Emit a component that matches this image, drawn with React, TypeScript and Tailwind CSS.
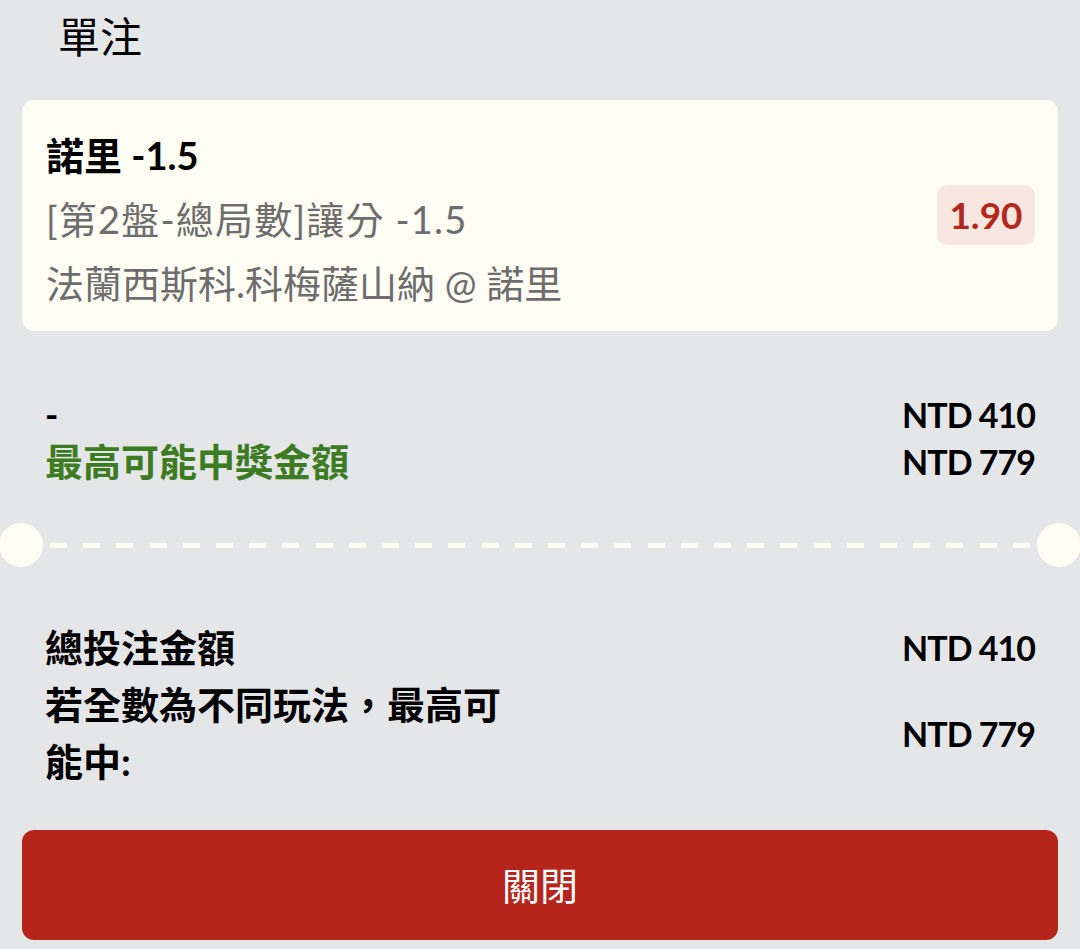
import React from 'react'

const dashes = Array.from({ length: 30 })

export default function App() {
  return (
    <div className="min-h-screen overflow-hidden bg-[#e5e6e8] font-['Lato','Noto_Sans_CJK_TC',sans-serif] text-black">
      {/* Title */}
      <div className="h-[100px] pl-[58px] pt-[10px] text-[42px] leading-[54px]">單注</div>

      {/* Selection card */}
      <div className="mx-[22px] flex items-center justify-between rounded-[12px] bg-[#fefdf4] pb-[16px] pl-[24px] pr-[23px] pt-[23px]">
        <div className="text-[38px] leading-[64px]">
          <div className="font-bold">諾里 -1.5</div>
          <div className="tracking-[1.2px] text-[#6d6d6d]">[第2盤-總局數]讓分 -1.5</div>
          <div className="text-[#6d6d6d]">法蘭西斯科.科梅薩山納 @ 諾里</div>
        </div>
        <div className="-mt-[9px] flex h-[60px] w-[98px] items-center justify-center rounded-[10px] bg-[#f8e6e0] text-[37px] font-bold text-[#b3271d]">
          1.90
        </div>
      </div>

      {/* Bet summary */}
      <div className="flex items-center justify-between px-[45px] pt-[60px] leading-[47px]">
        <div className="font-bold">
          <div className="text-[36px]">-</div>
          <div className="text-[38px] text-[#3c7b22]">最高可能中獎金額</div>
        </div>
        <div className="text-right text-[34px] font-bold tracking-[-1px]">
          <div>NTD 410</div>
          <div>NTD 779</div>
        </div>
      </div>

      {/* Ticket divider */}
      <div className="mt-[38px] flex items-center">
        <div className="-ml-[1px] h-[44px] w-[44px] shrink-0 rounded-full bg-[#fefdf4]" />
        <div className="mx-[7px] flex flex-1 justify-between">
          {dashes.map((_, i) => (
            <div key={i} className="h-[5px] w-[17px] bg-[#fefdf4]" />
          ))}
        </div>
        <div className="-mr-[1px] h-[44px] w-[44px] shrink-0 rounded-full bg-[#fefdf4]" />
      </div>

      {/* Totals */}
      <div className="px-[45px] pt-[52px] text-[38px] font-bold leading-[57px]">
        <div className="flex items-center justify-between">
          <div>總投注金額</div>
          <div className="text-[34px] tracking-[-1px]">NTD 410</div>
        </div>
        <div className="flex items-center justify-between">
          <div className="w-[480px]">若全數為不同玩法，最高可能中:</div>
          <div className="text-[34px] tracking-[-1px]">NTD 779</div>
        </div>
      </div>

      {/* Close button */}
      <button className="mx-[22px] mt-[40px] flex h-[110px] w-[calc(100%-44px)] items-center justify-center rounded-[12px] bg-[#b5251b] text-[38px] text-white">
        關閉
      </button>
    </div>
  )
}
